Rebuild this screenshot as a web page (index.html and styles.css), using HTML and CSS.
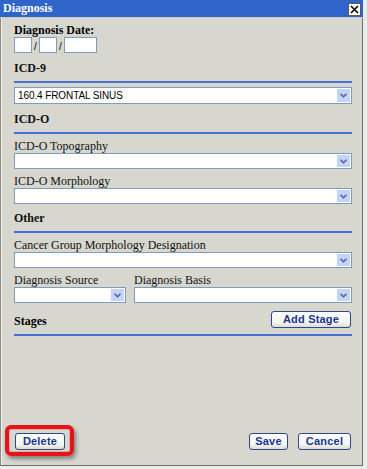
FILE: index.html
```html
<!DOCTYPE html>
<html lang="en">
<head>
    <meta charset="UTF-8">
    <title>Diagnosis</title>
    <link rel="stylesheet" href="styles.css">
</head>
<body>
<div class="dialog">
    <div class="titlebar">
        <span class="title">Diagnosis</span>
        <span class="close">
            <svg width="9" height="9" viewBox="0 0 9 9"><path d="M1 1 L8 8 M8 1 L1 8" stroke="#000" stroke-width="1.6"/></svg>
        </span>
    </div>

    <div class="content">
        <div class="date-label">Diagnosis Date:</div>
        <div class="date-row">
            <span class="box small"></span><span class="slash">/</span>
            <span class="box small"></span><span class="slash">/</span>
            <span class="box year"></span>
        </div>

        <div class="heading">ICD-9</div>
        <div class="rule"></div>
        <div class="select first">
            <span class="value">160.4 FRONTAL SINUS</span>
            <span class="arrow"><svg width="7" height="5" viewBox="0 0 7 5"><path d="M0.5 0.8 L3.5 3.8 L6.5 0.8" fill="none" stroke="#4d6185" stroke-width="1.5"/></svg></span>
        </div>

        <div class="heading">ICD-O</div>
        <div class="rule"></div>
        <div class="label">ICD-O Topography</div>
        <div class="select">
            <span class="value"></span>
            <span class="arrow"><svg width="7" height="5" viewBox="0 0 7 5"><path d="M0.5 0.8 L3.5 3.8 L6.5 0.8" fill="none" stroke="#4d6185" stroke-width="1.5"/></svg></span>
        </div>
        <div class="label">ICD-O Morphology</div>
        <div class="select">
            <span class="value"></span>
            <span class="arrow"><svg width="7" height="5" viewBox="0 0 7 5"><path d="M0.5 0.8 L3.5 3.8 L6.5 0.8" fill="none" stroke="#4d6185" stroke-width="1.5"/></svg></span>
        </div>

        <div class="heading other">Other</div>
        <div class="rule"></div>
        <div class="label">Cancer Group Morphology Designation</div>
        <div class="select">
            <span class="value"></span>
            <span class="arrow"><svg width="7" height="5" viewBox="0 0 7 5"><path d="M0.5 0.8 L3.5 3.8 L6.5 0.8" fill="none" stroke="#4d6185" stroke-width="1.5"/></svg></span>
        </div>

        <div class="pair">
            <div class="col source">
                <div class="label">Diagnosis Source</div>
                <div class="select">
                    <span class="value"></span>
                    <span class="arrow"><svg width="7" height="5" viewBox="0 0 7 5"><path d="M0.5 0.8 L3.5 3.8 L6.5 0.8" fill="none" stroke="#4d6185" stroke-width="1.5"/></svg></span>
                </div>
            </div>
            <div class="col basis">
                <div class="label">Diagnosis Basis</div>
                <div class="select">
                    <span class="value"></span>
                    <span class="arrow"><svg width="7" height="5" viewBox="0 0 7 5"><path d="M0.5 0.8 L3.5 3.8 L6.5 0.8" fill="none" stroke="#4d6185" stroke-width="1.5"/></svg></span>
                </div>
            </div>
        </div>

        <div class="stages-row">
            <span class="heading-inline">Stages</span>
            <button class="btn add">Add Stage</button>
        </div>
        <div class="rule"></div>

        <div class="footer">
            <span class="highlight">
                <button class="btn delete">Delete</button>
            </span>
            <div class="right-buttons">
                <button class="btn save">Save</button>
                <button class="btn cancel">Cancel</button>
            </div>
        </div>
    </div>
</div>
</body>
</html>
```

FILE: styles.css
```css
body {
    margin: 0;
    background: #ececea;
    font-family: 'Liberation Serif', 'Times New Roman', serif;
    width: 367px;
    height: 469px;
    overflow: hidden;
}

.dialog {
    width: 363px;
    height: 466px;
    box-sizing: border-box;
    background: #d7d7cf;
    border-left: 1px solid #8c8c88;
    border-right: 1px solid #6e6e6a;
    border-bottom: 1px solid #6e6e6a;
    display: flex;
    flex-direction: column;
}

/* Barra de titulo */
.titlebar {
    height: 17px;
    margin-left: -1px;
    margin-right: -1px;
    background: #2f65cb;
    border-bottom: 1px solid #c8c8c0;
    display: flex;
    align-items: center;
    justify-content: space-between;
    padding: 0 2px 0 3px;
}

    .titlebar .title {
        color: #fff;
        font-size: 12px;
        font-weight: bold;
        line-height: 17px;
    }

    .titlebar .close {
        width: 11px;
        height: 11px;
        background: #fff;
        border: 1px solid #5a5a5a;
        display: flex;
        align-items: center;
        justify-content: center;
        margin-top: 1px;
    }

.content {
    flex: 1;
    display: flex;
    flex-direction: column;
    padding: 6px 10px 0 13px;
    box-shadow: inset 1px 0 0 #efefe8;
}

.date-label {
    font-size: 12px;
    font-weight: bold;
    line-height: 13px;
}

.date-row {
    display: flex;
    height: 16px;
}

    .date-row .box {
        background: #fff;
        border: 1px solid #7f9db9;
        box-sizing: border-box;
        height: 16px;
    }

    .date-row .small {
        width: 18px;
    }

    .date-row .year {
        width: 33px;
    }

    .date-row .slash {
        width: 7px;
        text-align: center;
        font-family: 'Liberation Sans', Arial, sans-serif;
        font-size: 10px;
        line-height: 20px;
    }

.heading {
    font-size: 12px;
    font-weight: bold;
    line-height: 14px;
    margin-top: 8px;
    color: #111;
}

    .heading.other {
        margin-top: 7px;
    }

.rule {
    height: 2px;
    background: #4572d2;
    margin-top: 6px;
}

.label {
    font-size: 12px;
    line-height: 14px;
    margin-top: 5px;
    color: #111;
}

.select {
    height: 16px;
    box-sizing: border-box;
    background: #fff;
    border: 1px solid #7f9db9;
    display: flex;
    align-items: center;
    justify-content: space-between;
}

    .select.first {
        margin-top: 4px;
        height: 17px;
    }

    .select .value {
        font-family: 'Liberation Sans', Arial, sans-serif;
        font-size: 10px;
        padding-left: 3px;
        letter-spacing: -0.1px;
    }

    .select .arrow {
        width: 13px;
        height: calc(100% - 2px);
        margin-right: 1px;
        background: #c3d3f9;
        display: flex;
        align-items: center;
        justify-content: center;
    }

.pair {
    display: flex;
    gap: 8px;
}

    .pair .source {
        width: 112px;
    }

    .pair .basis {
        flex: 1;
    }

.stages-row {
    display: flex;
    justify-content: space-between;
    align-items: center;
    margin-top: 8px;
    height: 17px;
}

.heading-inline {
    font-size: 12px;
    font-weight: bold;
    line-height: 14px;
    padding-top: 2px;
}

.btn {
    font-family: 'Liberation Sans', Arial, sans-serif;
    font-size: 11px;
    font-weight: bold;
    color: #1a3590;
    background: linear-gradient(#ffffff, #f4f4f0 70%, #dcdcd4);
    border: 1px solid #2e4a80;
    border-radius: 3px;
    height: 17px;
    padding: 0;
    margin: 0;
    line-height: 15px;
    letter-spacing: 0.2px;
    cursor: pointer;
}

    .btn.add {
        width: 80px;
        margin-right: 1px;
    }

    .btn.delete {
        width: 50px;
    }

    .btn.save {
        width: 39px;
    }

    .btn.cancel {
        width: 53px;
    }

.footer {
    margin-top: auto;
    padding-bottom: 15px;
    display: flex;
    justify-content: space-between;
    align-items: center;
}

.right-buttons {
    display: flex;
    gap: 10px;
    margin-right: 1px;
}

/* Recuadro rojo de resaltado */
.highlight {
    position: relative;
    display: flex;
    margin-left: 1px;
}

    .highlight::after {
        content: '';
        position: absolute;
        top: -8px;
        left: -10px;
        right: -9px;
        bottom: -6px;
        border: 4px solid #e2151c;
        border-radius: 6px;
        box-shadow: 2px 3px 4px rgba(0, 0, 0, 0.4), inset 0 0 0 1px rgba(255, 130, 130, 0.6);
        pointer-events: none;
    }
```
